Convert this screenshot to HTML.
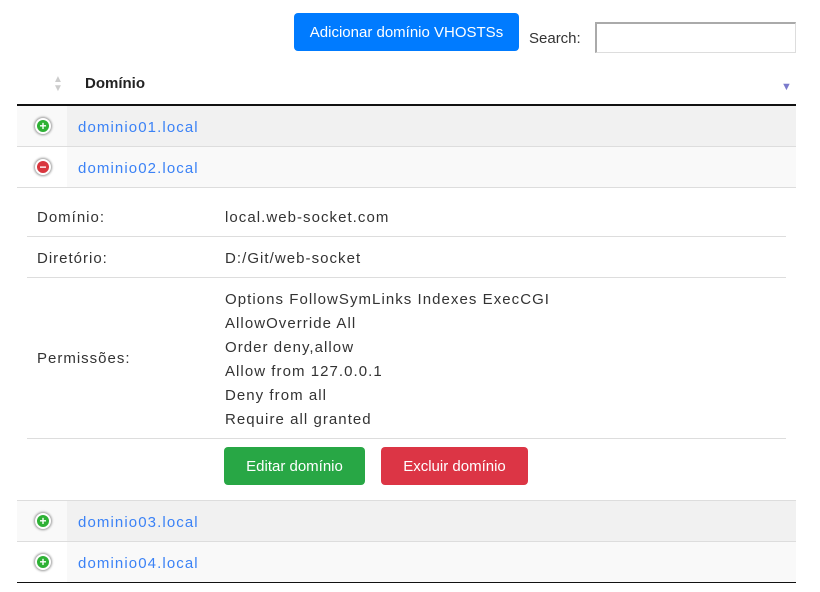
<!DOCTYPE html>
<html><head><meta charset="utf-8"><style>
*{margin:0;padding:0;box-sizing:border-box}
body{width:820px;height:592px;background:#fff;font-family:"Liberation Sans",sans-serif;position:relative;overflow:hidden;color:#212529}
.a{position:absolute}
.btn{position:absolute;color:#fff;border-radius:4px;font-size:15px;display:flex;align-items:center;justify-content:center}
.row{position:absolute;left:17px;width:779px;height:41px;border-bottom:1px solid #ddd}
.row .c1{position:absolute;left:0;top:0;width:50px;height:40px}
.row .c2{position:absolute;left:50px;top:0;right:0;height:40px}
.row a{position:absolute;left:61px;top:13px;color:#3b82f6;font-size:15px;text-decoration:none;letter-spacing:1.1px}
.ic{position:absolute;left:18px;top:12px;width:16px;height:16px;border-radius:50%;border:2px solid #fff;box-shadow:0 0 2px 1px #999;color:#fff;font-weight:bold;font-size:12px;line-height:12px;text-align:center}
.lab{position:absolute;left:37px;font-size:15px;color:#333;letter-spacing:1px;line-height:24px}
.val{position:absolute;left:225px;font-size:15px;color:#333;letter-spacing:1.05px;line-height:24px}
.hl{position:absolute;left:27px;width:759px;height:1px;background:#ddd}
</style></head><body>
<div class="btn" style="left:294px;top:13px;width:225px;height:38px;background:#007bff">Adicionar domínio VHOSTSs</div>
<div class="a" style="left:529px;top:30px;font-size:15px;color:#333">Search:</div>
<div class="a" style="left:595px;top:22px;width:201px;height:31px;border:2px solid #aaa;border-right-color:#ddd;border-bottom-color:#ddd;border-width:2px 1px 1px 2px"></div>
<div class="a" style="left:53px;top:75px;font-size:10px;color:#ccc;line-height:9px">▲<br>▼</div>
<div class="a" style="left:85px;top:75px;font-size:15px;font-weight:bold;color:#222">Domínio</div>
<div class="a" style="left:781px;top:81px;font-size:11px;color:#7a7acc">▼</div>
<div class="a" style="left:17px;top:104px;width:779px;height:2px;background:#111"></div>

<div class="row" style="top:106px"><div class="c1" style="background:#f9f9f9"></div><div class="c2" style="background:#f1f1f1"></div><div class="ic" style="background:#2eb135">+</div><a>dominio01.local</a></div>
<div class="row" style="top:147px"><div class="c1" style="background:#fff"></div><div class="c2" style="background:#f9f9f9"></div><div class="ic" style="background:#d9363e">−</div><a>dominio02.local</a></div>

<div class="lab" style="top:206px">Domínio:</div><div class="val" style="top:206px">local.web-socket.com</div>
<div class="hl" style="top:236px"></div>
<div class="lab" style="top:247px">Diretório:</div><div class="val" style="top:247px">D:/Git/web-socket</div>
<div class="hl" style="top:277px"></div>
<div class="lab" style="top:347px">Permissões:</div>
<div class="val" style="top:288px">Options FollowSymLinks Indexes ExecCGI<br>AllowOverride All<br>Order deny,allow<br>Allow from 127.0.0.1<br>Deny from all<br>Require all granted</div>
<div class="hl" style="top:438px"></div>
<div class="btn" style="left:224px;top:447px;width:141px;height:38px;background:#28a745">Editar domínio</div>
<div class="btn" style="left:381px;top:447px;width:147px;height:38px;background:#dc3545">Excluir domínio</div>
<div class="a" style="left:17px;top:500px;width:779px;height:1px;background:#ddd"></div>

<div class="row" style="top:501px"><div class="c1" style="background:#f9f9f9"></div><div class="c2" style="background:#f1f1f1"></div><div class="ic" style="background:#2eb135">+</div><a>dominio03.local</a></div>
<div class="row" style="top:542px;border-bottom:2px solid #111"><div class="c1" style="background:#fff"></div><div class="c2" style="background:#f9f9f9"></div><div class="ic" style="background:#2eb135">+</div><a>dominio04.local</a></div>
</body></html>
